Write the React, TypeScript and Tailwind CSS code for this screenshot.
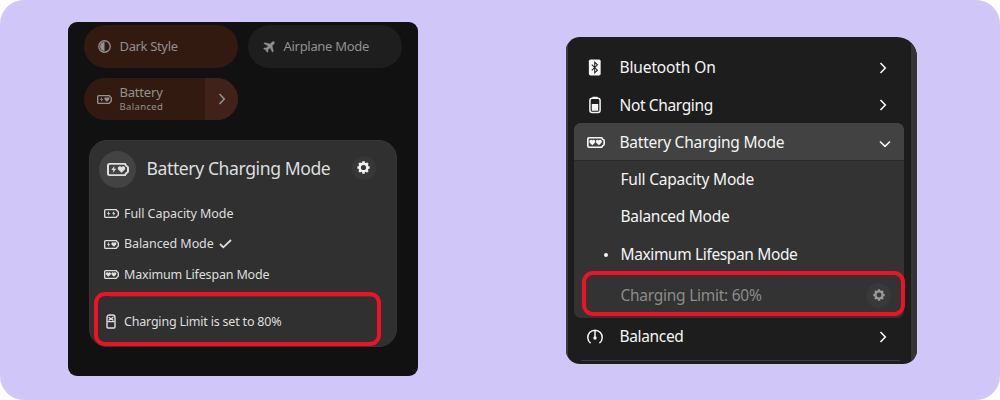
import React from "react";

type Glyph = "bolt" | "heart";

function GlyphShape({ kind, x }: { kind: Glyph; x: number }) {
  return kind === "bolt" ? (
    <path transform={`translate(${x} 3.2)`} d="M3.4 0 0.3 4.300h2.100L1.7 7.600 5.300 3.100H3.200Z" fill="currentColor" />
  ) : (
    <path
      transform={`translate(${x} 3.8)`}
      d="M3.5 6.7 0.3 3.4C-.9 1.8.3-.2 1.9-.2c.8 0 1.3.4 1.6 1 .3-.6.8-1 1.6-1C6.700-.2 7.900 1.800 6.700 3.400Z"
      fill="currentColor"
    />
  );
}

function BatteryMode({ first, second, className }: { first: Glyph; second: Glyph; className: string }) {
  return (
    <svg viewBox="0 0 22 14" className={`shrink-0 ${className}`} preserveAspectRatio="none">
      <path
        d="M2.500 1H18L19.200 3Q21 3.400 21 5v4q0 1.600-1.800 2L18 13H2.500Q1 13 1 11.500v-9Q1 1 2.500 1Z"
        fill="none"
        stroke="currentColor"
        strokeWidth="2"
      />
      <GlyphShape kind={first} x={first === "bolt" ? 4 : 3} />
      <GlyphShape kind={second} x={second === "bolt" ? 11.5 : 11} />
    </svg>
  );
}

function Gear({ className }: { className: string }) {
  return (
    <svg viewBox="0 0 14 14" className={className}>
      <circle cx="7" cy="7" r="4.100" fill="none" stroke="currentColor" strokeWidth="2.600" />
      <g stroke="currentColor" strokeWidth="2.700">
        <path d="M7 .4v2M7 11.600v2M.4 7h2M11.600 7h2M2.300 2.300l1.400 1.400M10.300 10.300l1.400 1.400M2.300 11.700l1.400-1.400M10.300 3.700l1.400-1.400" />
      </g>
    </svg>
  );
}

function Chevron({ className }: { className: string }) {
  return (
    <svg viewBox="0 0 8 12" className={className}>
      <path d="M1.500 1 6.300 6 1.500 11" fill="none" stroke="currentColor" strokeWidth="1.600" />
    </svg>
  );
}

function QuickSettings() {
  return (
    <section className="relative h-[354px] w-[350px] shrink-0 overflow-hidden rounded-[9px] bg-[#111111] pt-[3px] text-[#929090]">
      <div className="ml-[16px] flex gap-[10px] text-[13px] leading-none">
        <div className="flex h-[43px] w-[154px] items-center rounded-full bg-[#331a11] pl-[14px]">
          <svg viewBox="0 0 14 14" className="size-[13px]">
            <circle cx="7" cy="7" r="6.200" fill="none" stroke="currentColor" strokeWidth="1.400" />
            <path d="M7 2.200v9.600a4.800 4.800 0 0 1 0-9.600Z" fill="currentColor" />
          </svg>
          <span className="ml-[8.500px] whitespace-nowrap tracking-[-0.35px]">Dark Style</span>
        </div>
        <div className="flex h-[43px] w-[154px] items-center rounded-full bg-[#1e1e1e] pl-[14.500px]">
          <svg viewBox="0 0 14 14" className="size-[12px]">
            <path
              d="M13 1c-.8-.7-1.900-.2-2.700.6L8.500 3.400 2 1.900 1 3l5.200 2.700L3.800 8.300 1.600 8l-.9.9 2.600 1.700L5 13.300l.9-.9-.2-2.200 2.600-2.400L11 13l1.100-1-1.500-6.500 1.800-1.800C13.200 2.900 13.700 1.800 13 1Z"
              fill="currentColor"
              stroke="currentColor"
              strokeWidth=".5"
            />
          </svg>
          <span className="ml-[9px] whitespace-nowrap tracking-[-0.3px]">Airplane Mode</span>
        </div>
      </div>

      <div className="mt-[10px] ml-[16px] flex h-[42px] w-[154px] items-center overflow-hidden rounded-full bg-[#331a11] pl-[13px]">
        <BatteryMode first="bolt" second="heart" className="h-[9px] w-[15px]" />
        <div className="ml-[7.500px] flex flex-1 flex-col">
          <span className="text-[13px] leading-[15px] tracking-[-0.2px]">Battery</span>
          <span className="text-[9.500px] leading-[13px] tracking-[0.35px]">Balanced</span>
        </div>
        <div className="flex h-full w-[33px] items-center bg-[#40221a] pl-[13px]">
          <Chevron className="h-[14px] w-[8px]" />
        </div>
      </div>

      <div className="mt-[20px] ml-[21px] h-[207px] w-[308px] rounded-[18px] border border-[#363636] bg-[#303030] text-[#dedede]">
        <header className="flex h-[56px] items-center pl-[9px]">
          <div className="flex size-[37px] items-center justify-center rounded-full bg-[#434343]">
            <BatteryMode first="bolt" second="heart" className="h-[13px] w-[22px]" />
          </div>
          <h2 className="ml-[10.500px] w-[205px] pb-px text-[17.600px] leading-none whitespace-nowrap tracking-[-0.42px]">
            Battery Charging Mode
          </h2>
          <div className="mb-[3px] flex size-[24px] items-center justify-center rounded-full bg-[#373737] text-[#f2f2f2]">
            <Gear className="size-[13px]" />
          </div>
        </header>
        <ul className="pt-[1.500px] pl-[14px] text-[12.500px] leading-none">
          <li className="flex h-[30.500px] items-center gap-[5px]">
            <BatteryMode first="bolt" second="bolt" className="h-[9px] w-[15px]" />
            <span className="whitespace-nowrap tracking-[-0.06px]">Full Capacity Mode</span>
          </li>
          <li className="flex h-[30.500px] items-center gap-[5px]">
            <BatteryMode first="bolt" second="heart" className="h-[9px] w-[15px]" />
            <span className="whitespace-nowrap tracking-[-0.08px]">Balanced Mode</span>
            <svg viewBox="0 0 13 10" className="h-[10px] w-[13px]">
              <path d="m1 5 3.300 3.300L12 1" fill="none" stroke="currentColor" strokeWidth="1.800" />
            </svg>
          </li>
          <li className="flex h-[30.500px] items-center gap-[5px]">
            <BatteryMode first="heart" second="heart" className="h-[9px] w-[15px]" />
            <span className="whitespace-nowrap tracking-[-0.17px]">Maximum Lifespan Mode</span>
          </li>
          <li className="mt-[6px] mr-[16px] ml-[6px] h-px bg-[#3d3d3d]" />
          <li className="flex h-[48px] items-center">
            <svg viewBox="0 0 10 15" className="ml-[2px] h-[15px] w-[10px]" fill="none" stroke="currentColor">
              <path d="M1 13V3.500Q1 1 3.500 1h3Q9 1 9 3.500V13q0 1-1 1H2q-1 0-1-1Z" strokeWidth="1.400" />
              <path d="M1.500 7.600h7M2.600 2.800 5 5.200l2.400-2.400M2.600 6.500 5 4.300l2.400 2.200" strokeWidth="1.200" />
            </svg>
            <span className="ml-[8px] pt-[2px] whitespace-nowrap tracking-[-0.2px]">Charging Limit is set to 80%</span>
          </li>
        </ul>
      </div>
      <div className="absolute top-[270px] left-[26px] h-[54px] w-[287px] rounded-[11px] border-4 border-[#f01127]" />
    </section>
  );
}

function SystemMenu() {
  return (
    <section className="relative flex h-[327px] w-[351px] shrink-0 overflow-hidden rounded-[14px] rounded-tr-[20px] bg-[#1d1d1d] text-[15.500px] leading-none text-[#f5f5f5]">
      <div className="w-[2px] shrink-0 bg-[#3b3c3c]" />
      <div className="min-w-0 flex-1 pt-[12px]">
        <div className="flex h-[37px] items-center pl-[20px]">
          <svg viewBox="0 0 14 18" className="h-[17px] w-[14px]">
            <rect x=".5" y=".5" width="12.500" height="17" rx="1.800" fill="currentColor" />
            <path d="m3.600 6 6 5.800-2.900 2.700v-11l2.900 2.700-6 5.800" fill="none" stroke="#222" strokeWidth="1.100" />
          </svg>
          <span className="ml-[17.500px] flex-1 pt-px whitespace-nowrap tracking-[-0.13px]">Bluetooth On</span>
          <Chevron className="mr-[24px] h-[12px] w-[8px]" />
        </div>
        <div className="flex h-[37px] items-center pl-[20px]">
          <svg viewBox="0 0 14 18" className="h-[18px] w-[14px]">
            <path d="M4.500 2.500V.8h5v1.700" fill="currentColor" />
            <rect x="1.900" y="2.300" width="10.200" height="14.200" rx="2.200" fill="none" stroke="currentColor" strokeWidth="1.500" />
            <path d="M3.800 8h6.400v6.700H3.800Z" fill="currentColor" />
          </svg>
          <span className="ml-[17.500px] flex-1 pt-[2px] whitespace-nowrap tracking-[-0.37px]">Not Charging</span>
          <Chevron className="mr-[24px] h-[12px] w-[8px]" />
        </div>

        <div className="ml-[6px] h-[195px] w-[330px] overflow-hidden rounded-[7px] bg-[#333333]">
          <div className="flex h-[38px] items-center border-b border-[#292929] bg-[#424242] pl-[13px]">
            <BatteryMode first="heart" second="heart" className="mt-px h-[11px] w-[18px]" />
            <span className="ml-[14.500px] flex-1 pt-[2px] whitespace-nowrap tracking-[-0.24px]">Battery Charging Mode</span>
            <Chevron className="mt-[4px] mr-[15px] h-[12px] w-[8px] rotate-90" />
          </div>
          <div className="flex h-[37.300px] items-center pt-px pl-[46.500px] whitespace-nowrap tracking-[-0.2px]">
            Full Capacity Mode
          </div>
          <div className="flex h-[37.300px] items-center pl-[46.500px] whitespace-nowrap tracking-[-0.28px]">
            Balanced Mode
          </div>
          <div className="flex h-[37.300px] items-center pt-[2px] pl-[29.500px] whitespace-nowrap tracking-[-0.37px]">
            <i className="mr-[13px] size-[4px] rounded-full bg-current" />
            Maximum Lifespan Mode
          </div>
          <div className="flex h-[45px] items-center pl-[46.500px] text-[#8c8c8c]">
            <span className="flex-1 pt-px whitespace-nowrap tracking-[-0.26px]">Charging Limit: 60%</span>
            <div className="mr-[13px] flex size-[25px] items-center justify-center rounded-full bg-[#393939] text-[#999999]">
              <Gear className="size-[12px]" />
            </div>
          </div>
        </div>

        <div className="flex h-[37px] items-center pl-[18px]">
          <svg viewBox="0 0 18 17" className="h-[16px] w-[18px]" fill="none" stroke="currentColor" strokeWidth="1.600">
            <path d="M4.300 15A7.700 7.700 0 1 1 13.700 15M9 1.500V9" />
            <circle cx="9" cy="9.500" r="1.800" fill="currentColor" stroke="none" />
          </svg>
          <span className="ml-[15.500px] flex-1 pt-px whitespace-nowrap tracking-[-0.35px]">Balanced</span>
          <Chevron className="mr-[24px] h-[12px] w-[8px]" />
        </div>
        <div className="mt-[5px] mr-[11px] ml-[13px] h-px bg-[#3c3c3c]" />
      </div>
      <div className="w-[6px] shrink-0 bg-[#343434]" />
      <div className="absolute top-[234px] left-[16px] h-[45px] w-[323px] rounded-[11px] border-4 border-[#f01127]" />
    </section>
  );
}

export default function App() {
  return (
    <div className="h-[400px] w-[1000px] overflow-hidden bg-white font-['Noto_Sans',sans-serif]">
      <main className="flex h-full items-start rounded-[24px] bg-[#d0c6f7] pl-[68px]">
        <div className="pt-[22px]">
          <QuickSettings />
        </div>
        <div className="ml-[148px] pt-[37px]">
          <SystemMenu />
        </div>
      </main>
    </div>
  );
}
